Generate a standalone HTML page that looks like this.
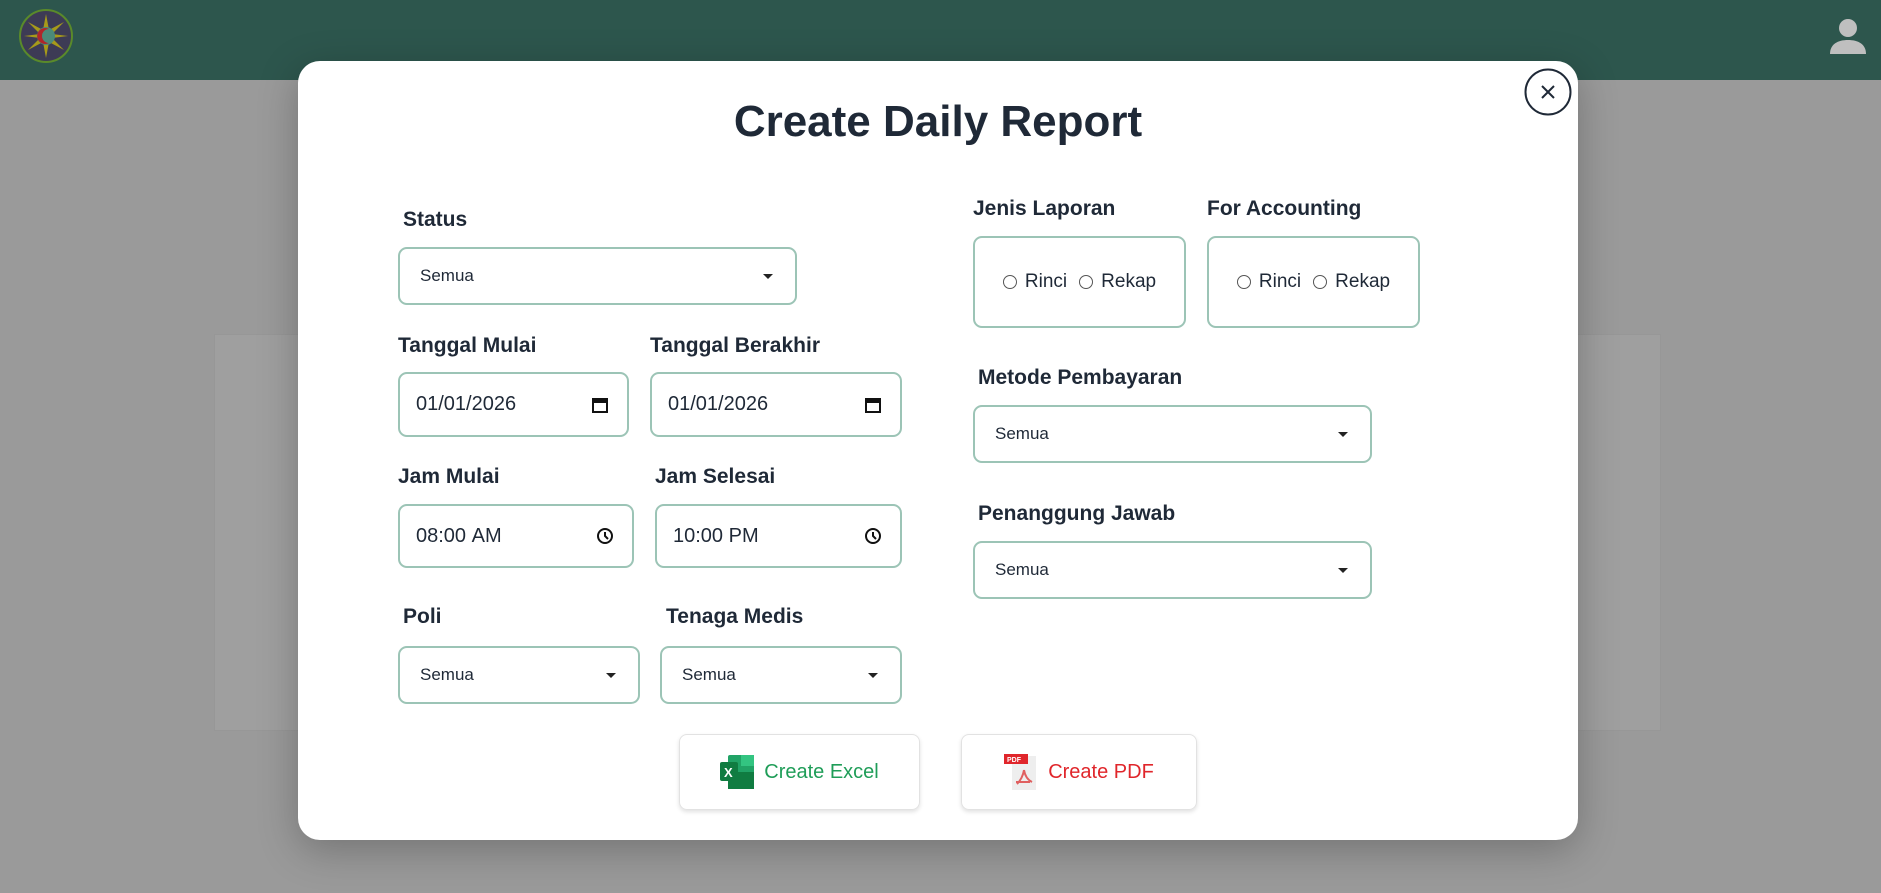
<!DOCTYPE html>
<html><head><meta charset="utf-8"><style>
*{box-sizing:border-box;margin:0;padding:0}
body{width:1881px;height:893px;overflow:hidden;background:#9a9a9a;font-family:"Liberation Sans",sans-serif;position:relative;color:#1f2937}
.hdr{position:absolute;left:0;top:0;width:1881px;height:80px;background:#2d564d}
.panel{position:absolute;left:214px;top:334px;width:1447px;height:397px;background:#9f9f9f;border:1px solid #979797}
.modal{position:absolute;left:298px;top:61px;width:1280px;height:779px;background:#fff;border-radius:22px;box-shadow:0 10px 40px rgba(0,0,0,.25)}
.t{position:absolute;font-weight:bold;font-size:21px;color:#1f2937;z-index:2}
.f{position:absolute;border:2px solid #9cc4b6;border-radius:9px;background:#fff;font-size:20px;color:#1f2937;display:flex;align-items:center;padding-left:16px}
.sel{font-size:17px;padding-left:20px}
.sel:after{content:"";position:absolute;right:22px;top:50%;margin-top:-2px;border-left:5px solid transparent;border-right:5px solid transparent;border-top:5px solid #222}
.ic{position:absolute;right:18px;top:50%;transform:translateY(-50%)}
.rb{position:absolute;border:2px solid #9cc4b6;border-radius:9px;display:flex;align-items:center;justify-content:center;font-size:19px;gap:6px}
.r{display:inline-block;width:14px;height:14px;border:1.5px solid #555;border-radius:50%;margin-right:2px}
.btn{position:absolute;border:1px solid #e2e2e2;border-radius:8px;box-shadow:0 2px 4px rgba(0,0,0,.12);display:flex;align-items:center;justify-content:center;font-size:20px;gap:10px}
</style></head><body>
<div class="hdr">
<svg style="position:absolute;left:18px;top:8px" width="56" height="56" viewBox="0 0 56 56"><circle cx="28" cy="28" r="26" fill="#3d3b55" stroke="#5a8a2a" stroke-width="2"/><g fill="#a79a1a"><polygon points="28,6 31,22 46,14 34,26 50,28 34,30 46,42 31,34 28,50 25,34 10,42 22,30 6,28 22,26 10,14 25,22"/></g><circle cx="28" cy="28" r="9" fill="#4b8a7a"/><path d="M31 21a8 8 0 1 0 0 14a6 6 0 1 1 0-14z" fill="#b0262a"/></svg>
<svg style="position:absolute;left:1828px;top:16px" width="40" height="40" viewBox="0 0 40 40"><circle cx="20" cy="12" r="9" fill="#bfbfbf"/><path d="M2 38c0-10 8-14 18-14s18 4 18 14z" fill="#bfbfbf"/></svg>
</div>
<div class="panel"></div>
<div class="modal">
<div style="position:absolute;left:0;width:1280px;top:36px;text-align:center;font-size:44px;font-weight:bold;color:#1f2937">Create Daily Report</div>
<svg style="position:absolute;left:1226px;top:7px" width="48" height="48" viewBox="0 0 48 48"><circle cx="24" cy="24" r="22.5" fill="#fff" stroke="#1f2937" stroke-width="2"/><path d="M18 18l12 12M30 18L18 30" stroke="#1f2937" stroke-width="2"/></svg>

<div class="t" style="left:105px;top:147px">Status</div>
<div class="f sel" style="left:100px;top:186px;width:399px;height:58px">Semua</div>

<div class="t" style="left:100px;top:273px">Tanggal Mulai</div>
<div class="t" style="left:352px;top:273px">Tanggal Berakhir</div>
<div class="f" style="left:100px;top:311px;width:231px;height:65px">01/01/2026<svg class="ic" width="18" height="18" viewBox="0 0 18 18"><rect x="2" y="3" width="14" height="13" fill="none" stroke="#111" stroke-width="2"/><rect x="2" y="3" width="14" height="4" fill="#111"/></svg></div>
<div class="f" style="left:352px;top:311px;width:252px;height:65px">01/01/2026<svg class="ic" width="18" height="18" viewBox="0 0 18 18"><rect x="2" y="3" width="14" height="13" fill="none" stroke="#111" stroke-width="2"/><rect x="2" y="3" width="14" height="4" fill="#111"/></svg></div>

<div class="t" style="left:100px;top:404px">Jam Mulai</div>
<div class="t" style="left:357px;top:404px">Jam Selesai</div>
<div class="f" style="left:100px;top:443px;width:236px;height:64px">08:00&nbsp;AM<svg class="ic" width="18" height="18" viewBox="0 0 18 18"><circle cx="9" cy="9" r="7" fill="none" stroke="#111" stroke-width="2"/><path d="M9 5v4l3 3" stroke="#111" stroke-width="2" fill="none"/></svg></div>
<div class="f" style="left:357px;top:443px;width:247px;height:64px">10:00&nbsp;PM<svg class="ic" width="18" height="18" viewBox="0 0 18 18"><circle cx="9" cy="9" r="7" fill="none" stroke="#111" stroke-width="2"/><path d="M9 5v4l3 3" stroke="#111" stroke-width="2" fill="none"/></svg></div>

<div class="t" style="left:105px;top:544px">Poli</div>
<div class="t" style="left:368px;top:544px">Tenaga Medis</div>
<div class="f sel" style="left:100px;top:585px;width:242px;height:58px">Semua</div>
<div class="f sel" style="left:362px;top:585px;width:242px;height:58px">Semua</div>

<div class="t" style="left:675px;top:136px">Jenis Laporan</div>
<div class="t" style="left:909px;top:136px">For Accounting</div>
<div class="rb" style="left:675px;top:175px;width:213px;height:92px"><span class="r"></span>Rinci <span class="r" style="margin-left:6px"></span>Rekap</div>
<div class="rb" style="left:909px;top:175px;width:213px;height:92px"><span class="r"></span>Rinci <span class="r" style="margin-left:6px"></span>Rekap</div>

<div class="t" style="left:680px;top:305px">Metode Pembayaran</div>
<div class="f sel" style="left:675px;top:344px;width:399px;height:58px">Semua</div>
<div class="t" style="left:680px;top:441px">Penanggung Jawab</div>
<div class="f sel" style="left:675px;top:480px;width:399px;height:58px">Semua</div>

<div class="btn" style="left:381px;top:673px;width:241px;height:76px;color:#1f9d58"><svg width="34" height="34" viewBox="0 0 34 34"><rect x="8" y="0" width="26" height="34" rx="2" fill="#21a366"/><rect x="8" y="17" width="26" height="17" fill="#107c41"/><rect x="21" y="0" width="13" height="11" fill="#33c481"/><rect x="0" y="7" width="18" height="19" rx="2" fill="#107c41"/><text x="4" y="22" font-size="13" font-weight="bold" fill="#fff" font-family="Liberation Sans">X</text></svg>Create Excel</div>
<div class="btn" style="left:663px;top:673px;width:236px;height:76px;color:#e0262b"><svg width="34" height="36" viewBox="0 0 34 36"><rect x="8" y="2" width="24" height="34" fill="#eee"/><rect x="0" y="0" width="24" height="10" fill="#e0262b"/><text x="3" y="8" font-size="7" font-weight="bold" fill="#fff" font-family="Liberation Sans">PDF</text><path d="M20 16c-1 6-4 11-7 14M20 16c1 6 4 10 8 12M12 28h14" stroke="#e06060" stroke-width="2" fill="none"/></svg>Create PDF</div>
</div>
</body></html>
